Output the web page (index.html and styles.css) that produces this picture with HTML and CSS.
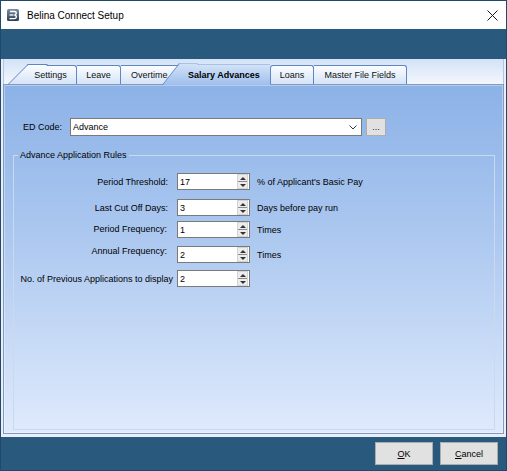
FILE: index.html
```html
<!DOCTYPE html>
<html>
<head>
<meta charset="utf-8">
<link rel="stylesheet" href="styles.css">
</head>
<body>
<div class="win">
  <div class="titlebar">
    <svg class="appicon" width="12" height="12" viewBox="0 0 12 12">
      <defs>
        <linearGradient id="ig" x1="0" y1="0" x2="0" y2="1">
          <stop offset="0" stop-color="#7d90a6"/>
          <stop offset="1" stop-color="#2c3d52"/>
        </linearGradient>
      </defs>
      <rect x="0" y="0" width="12" height="12" rx="1.5" fill="url(#ig)"/>
      <path d="M3 2.5 H7.5 Q9.5 2.5 9.2 4.5 Q9 5.8 7.4 6 Q9.6 6.3 9.3 8.2 Q9 9.6 7.2 9.6 H2.5" fill="none" stroke="#fff" stroke-width="1.4"/>
      <path d="M2.5 6 H6.5" stroke="#fff" stroke-width="1.3"/>
    </svg>
    <span class="title">Belina Connect Setup</span>
    <svg class="close" width="11" height="11" viewBox="0 0 11 11">
      <path d="M0.5 0.5 L10.5 10.5 M10.5 0.5 L0.5 10.5" stroke="#1a1a1a" stroke-width="1"/>
    </svg>
  </div>
  <div class="band"></div>
  <div class="main">
    <div class="tabs">
      <div class="tab t-settings">Settings</div>
      <div class="tab t-leave">Leave</div>
      <div class="tab t-overtime">Overtime</div>
      <div class="tab t-sel">Salary Advances</div>
      <div class="tab t-loans">Loans</div>
      <div class="tab t-master">Master File Fields</div>
    </div>
    <div class="panel">
      <div class="edrow">
        <span class="edlabel">ED Code:</span>
        <div class="combo">
          <span>Advance</span>
          <svg class="chev" width="8" height="5" viewBox="0 0 8 5"><polyline points="0.5,0.5 4,4 7.5,0.5" fill="none" stroke="#3a3a3a" stroke-width="1"/></svg>
        </div>
        <div class="dots">...</div>
      </div>
      <fieldset class="group">
        <legend>Advance Application Rules</legend>
        <div class="row r1">
          <span class="lbl">Period Threshold:</span>
          <div class="num"><span class="val">17</span><div class="spin"><div class="half"><i class="up"></i></div><div class="half dn"><i class="down"></i></div></div></div>
          <span class="unit">% of Applicant's Basic Pay</span>
        </div>
        <div class="row r2">
          <span class="lbl">Last Cut Off Days:</span>
          <div class="num"><span class="val">3</span><div class="spin"><div class="half"><i class="up"></i></div><div class="half dn"><i class="down"></i></div></div></div>
          <span class="unit">Days before pay run</span>
        </div>
        <div class="row r3">
          <span class="lbl lbl-pf">Period Frequency:</span>
          <div class="num"><span class="val">1</span><div class="spin"><div class="half"><i class="up"></i></div><div class="half dn"><i class="down"></i></div></div></div>
          <span class="unit">Times</span>
        </div>
        <div class="row r4">
          <span class="lbl lbl-af">Annual Frequency:</span>
          <div class="num"><span class="val">2</span><div class="spin"><div class="half"><i class="up"></i></div><div class="half dn"><i class="down"></i></div></div></div>
          <span class="unit">Times</span>
        </div>
        <div class="row r5">
          <span class="lbl lbl-wide">No. of Previous Applications to display</span>
          <div class="num"><span class="val">2</span><div class="spin"><div class="half"><i class="up"></i></div><div class="half dn"><i class="down"></i></div></div></div>
        </div>
      </fieldset>
    </div>
  </div>
  <div class="footer">
    <button class="btn"><u>O</u>K</button>
    <button class="btn"><u>C</u>ancel</button>
  </div>
</div>
</body>
</html>
```

FILE: styles.css
```css
* { box-sizing: border-box; }
html, body { margin: 0; padding: 0; }
body {
  width: 507px;
  height: 471px;
  font-family: "Liberation Sans", Arial, sans-serif;
  font-size: 9px;
  color: #000;
  overflow: hidden;
}
.win {
  width: 507px;
  height: 471px;
  border: 1px solid #22496a;
  display: flex;
  flex-direction: column;
}
.titlebar {
  height: 28px;
  background: #fff;
  display: flex;
  align-items: center;
  flex: none;
}
.appicon { margin-left: 6px; flex: none; }
.title {
  margin-left: 8px;
  font-size: 10px;
  color: #000;
}
.close { margin-left: auto; margin-right: 8px; }
.band {
  height: 30px;
  background: #295a7e;
  flex: none;
}
.main {
  flex: 1;
  background: #e8eff9;
  padding: 0 2px 3px 2px;
  display: flex;
  flex-direction: column;
}
.tabs {
  height: 25px;
  flex: none;
  background: linear-gradient(#d3e2f6, #f3f7fd);
  display: flex;
  align-items: flex-end;
  padding-left: 23px;
  border-left: 1px solid #b3c5df;
  border-right: 1px solid #b3c5df;
}
.tab {
  position: relative;
  z-index: 1;
  height: 19px;
  border: 1px solid #5f86c4;
  border-left: none;
  border-bottom: none;
  border-radius: 0 3px 0 0;
  background: linear-gradient(#fbfdff, #d5e3f7);
  line-height: 19px;
  text-align: center;
  color: #111;
  white-space: nowrap;
  flex: none;
}
.t-settings { width: 50px; padding-right: 2px; }
.t-settings::before {
  content: "";
  position: absolute;
  z-index: -1;
  left: -19px;
  bottom: 0;
  width: 19px;
  height: 19px;
  border-top: 1px solid #5f86c4;
  border-left: 1px solid #5f86c4;
  background: linear-gradient(#fbfdff, #d5e3f7);
  transform-origin: bottom left;
  transform: skewX(-45deg);
}
.t-leave { width: 44px; }
.t-overtime { width: 61px; text-align: left; padding-left: 10px; overflow: hidden; }
.t-sel {
  z-index: 3;
  width: 91px;
  height: 21px;
  margin-left: -3px;
  margin-bottom: -1px;
  border-top: 1px solid #a9c1e6;
  border-right: none;
  border-radius: 0;
  background: linear-gradient(#d2e2f7, #9fbfec);
  font-weight: bold;
  text-align: left;
  padding-left: 9px;
  line-height: 21px;
  color: #000;
}
.t-sel::before {
  content: "";
  position: absolute;
  z-index: -1;
  left: -17px;
  bottom: 0;
  width: 18px;
  height: 21px;
  border-top: 1px solid #a9c1e6;
  border-left: 1px solid #5f86c4;
  background: linear-gradient(#d2e2f7, #9fbfec);
  transform-origin: bottom left;
  transform: skewX(-38deg);
}
.t-loans { width: 44px; border-left: 1px solid #5f86c4; border-radius: 3px 3px 0 0; }
.t-master { width: 93px; }
.panel {
  flex: 1;
  border: 1px solid #8399bf;
  box-shadow: inset 0 0 0 1px rgba(255,255,255,0.35);
  background: linear-gradient(#8cb2e7, #a9c6ef 40%, #dfeafc);
  padding: 33px 8px 3px 9px;
  display: flex;
  flex-direction: column;
}
.edrow {
  height: 18px;
  display: flex;
  align-items: center;
  padding-left: 10px;
  flex: none;
}
.edlabel { width: 47px; }
.combo {
  width: 292px;
  height: 18px;
  border: 1px solid #7a7a7a;
  background: #fff;
  display: flex;
  align-items: center;
  padding-left: 2px;
}
.chev { margin-left: auto; margin-right: 4px; }
.dots {
  margin-left: 4px;
  width: 20px;
  height: 18px;
  border: 1px solid #adadad;
  background: #e1e1e1;
  text-align: center;
  line-height: 17px;
  color: #222;
}
.group {
  margin: 14px 0 0 0;
  padding: 0;
  border: 1px solid #cad9ee;
  flex: 1;
  min-width: 0;
}
.group legend {
  margin-left: 4px;
  padding: 0 2px;
  line-height: 11px;
  font-size: 9px;
}
.row {
  display: flex;
  align-items: center;
  height: 17px;
}
.r1 { margin-top: 12px; }
.r2 { margin-top: 9px; }
.r3 { margin-top: 5px; }
.r4 { margin-top: 8px; }
.r5 { margin-top: 7px; }
.lbl {
  width: 159px;
  text-align: right;
  padding-right: 5px;
  white-space: nowrap;
}
.lbl-pf { position: relative; top: -1px; padding-right: 6px; }
.lbl-af { position: relative; top: -4px; padding-right: 6px; }
.lbl-wide { padding-right: 0; }
.num {
  margin-left: 4px;
  width: 73px;
  height: 17px;
  border: 1px solid #7a7a7a;
  background: #fff;
  display: flex;
  align-items: center;
  padding-left: 2px;
}
.spin {
  margin: 0 1px 0 auto;
  width: 11px;
  height: 15px;
  display: flex;
  flex-direction: column;
  background: #ececec;
  border: 1px solid #d4d4d4;
}
.half {
  flex: 1;
  display: flex;
  align-items: center;
  justify-content: center;
}
.half.dn { border-top: 1px solid #8a8a8a; }
.up, .down { display: block; width: 0; height: 0; border-left: 3px solid transparent; border-right: 3px solid transparent; }
.up { border-bottom: 3px solid #333; }
.down { border-top: 3px solid #333; }
.unit { margin-left: 7px; white-space: nowrap; }
.footer {
  height: 33px;
  flex: none;
  background: #295a7e;
  display: flex;
  justify-content: flex-end;
  align-items: center;
  gap: 7px;
  padding-right: 8px;
}
.btn {
  width: 58px;
  height: 23px;
  margin: 0;
  padding: 0;
  border: 1px solid #adadad;
  background: #e1e1e1;
  font-family: "Liberation Sans", Arial, sans-serif;
  font-size: 9px;
  color: #000;
}
```
